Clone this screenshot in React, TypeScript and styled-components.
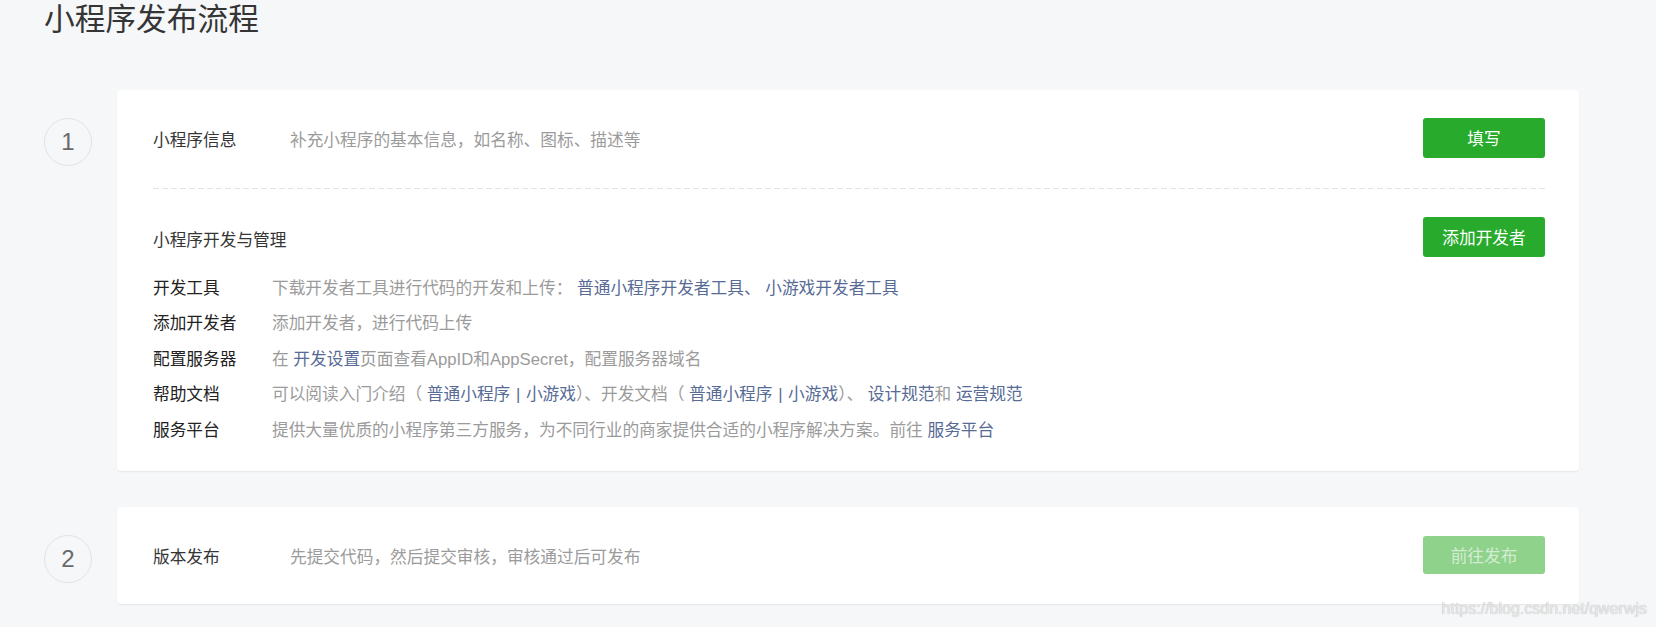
import React from "react";
import styled, { createGlobalStyle } from "styled-components";

const GlobalStyle = createGlobalStyle`
  html, body {
    margin: 0;
    padding: 0;
    background: #f6f7f9;
  }
  body {
    font-family: "Liberation Sans", "Noto Sans CJK SC", sans-serif;
    color: #353535;
  }
`;

const Page = styled.div`
  position: relative;
  box-sizing: border-box;
  width: 1656px;
  height: 627px;
  padding: 0 77px 0 44px;
  overflow: hidden;
`;

const Title = styled.h1`
  margin: 0 0 50px 0;
  font-size: 30.7px;
  line-height: 40px;
  font-weight: normal;
  color: #353535;
`;

const Steps = styled.div`
  display: flex;
  flex-direction: column;
  gap: 36px;
`;

const Step = styled.div`
  display: flex;
  align-items: flex-start;
  gap: 25px;
`;

const StepNum = styled.div`
  flex: none;
  box-sizing: border-box;
  width: 48px;
  height: 48px;
  margin-top: 28px;
  border: 1px solid #e2e3e5;
  border-radius: 50%;
  display: flex;
  align-items: center;
  justify-content: center;
  font-size: 24px;
  color: #6a6a6a;
`;

const Card = styled.div<{ $pad: string }>`
  flex: 1;
  background: #fff;
  border-radius: 4px;
  box-shadow: 0 1px 2px rgba(0, 0, 0, 0.07);
  padding: ${(p) => p.$pad};
`;

const Row = styled.div`
  display: flex;
  align-items: center;
  font-size: 16.7px;
`;

const Label = styled.div<{ $w: number }>`
  flex: none;
  width: ${(p) => p.$w}px;
  color: #353535;
  padding-top: 2px;
`;

const Desc = styled.div`
  flex: 1;
  color: #9b9b9b;
  padding-top: 2px;
`;

const Button = styled.button<{ $h: number; $disabled?: boolean }>`
  flex: none;
  width: 122px;
  height: ${(p) => p.$h}px;
  border: none;
  border-radius: 3px;
  background: ${(p) => (p.$disabled ? "#8fd28c" : "#28ab2c")};
  color: ${(p) => (p.$disabled ? "rgba(255,255,255,0.62)" : "#fff")};
  font-family: "Liberation Sans", "Noto Sans CJK SC", sans-serif;
  font-size: 16.7px;
  padding: 0;
  cursor: pointer;
`;

const Divider = styled.div`
  height: 1px;
  margin: 30px 0 28px;
  background-image: linear-gradient(to right, #e2e2e2 62%, transparent 0);
  background-size: 9px 1px;
  background-repeat: repeat-x;
`;

const SectionTitle = styled.div`
  flex: 1;
  color: #353535;
  padding-top: 4px;
`;

const InfoList = styled.div`
  margin-top: 14px;
  display: flex;
  flex-direction: column;
`;

const InfoRow = styled.div`
  display: flex;
  font-size: 16.7px;
  line-height: 35.4px;
`;

const InfoLabel = styled.div`
  flex: none;
  width: 119px;
  color: #222;
`;

const InfoText = styled.div`
  flex: 1;
  color: #9b9b9b;
  white-space: nowrap;
`;

const Link = styled.a`
  color: #576b95;
  text-decoration: none;
`;

const Pipe = styled.span`
  margin: 0 1px;
`;

const Watermark = styled.div`
  position: absolute;
  right: 9px;
  bottom: 9px;
  font-family: "Liberation Sans", sans-serif;
  font-size: 16px;
  color: #e8e8e8;
  text-shadow: 0 0 1px rgba(0, 0, 0, 0.3);
`;

const infoRows: { label: string; content: React.ReactNode }[] = [
  {
    label: "开发工具",
    content: (
      <>
        下载开发者工具进行代码的开发和上传：{" "}
        <Link>普通小程序开发者工具、</Link> <Link>小游戏开发者工具</Link>
      </>
    ),
  },
  { label: "添加开发者", content: <>添加开发者，进行代码上传</> },
  {
    label: "配置服务器",
    content: (
      <>
        在 <Link>开发设置</Link>页面查看AppID和AppSecret，配置服务器域名
      </>
    ),
  },
  {
    label: "帮助文档",
    content: (
      <>
        可以阅读入门介绍（{" "}
        <Link>
          普通小程序 <Pipe>|</Pipe> 小游戏
        </Link>
        ）、开发文档（{" "}
        <Link>
          普通小程序 <Pipe>|</Pipe> 小游戏
        </Link>
        ）、 <Link>设计规范</Link>和 <Link>运营规范</Link>
      </>
    ),
  },
  {
    label: "服务平台",
    content: (
      <>
        提供大量优质的小程序第三方服务，为不同行业的商家提供合适的小程序解决方案。前往{" "}
        <Link>服务平台</Link>
      </>
    ),
  },
];

export default function App() {
  return (
    <>
      <GlobalStyle />
      <Page>
        <Title>小程序发布流程</Title>
        <Steps>
          <Step>
            <StepNum>1</StepNum>
            <Card $pad="28px 34px 23px 36px">
              <Row>
                <Label $w={137}>小程序信息</Label>
                <Desc>补充小程序的基本信息，如名称、图标、描述等</Desc>
                <Button $h={40}>填写</Button>
              </Row>
              <Divider />
              <Row>
                <SectionTitle>小程序开发与管理</SectionTitle>
                <Button $h={40}>添加开发者</Button>
              </Row>
              <InfoList>
                {infoRows.map((r) => (
                  <InfoRow key={r.label}>
                    <InfoLabel>{r.label}</InfoLabel>
                    <InfoText>{r.content}</InfoText>
                  </InfoRow>
                ))}
              </InfoList>
            </Card>
          </Step>
          <Step>
            <StepNum>2</StepNum>
            <Card $pad="29px 34px 30px 36px">
              <Row>
                <Label $w={137}>版本发布</Label>
                <Desc>先提交代码，然后提交审核，审核通过后可发布</Desc>
                <Button $h={38} $disabled>
                  前往发布
                </Button>
              </Row>
            </Card>
          </Step>
        </Steps>
        <Watermark>https://blog.csdn.net/qwerwjs</Watermark>
      </Page>
    </>
  );
}
